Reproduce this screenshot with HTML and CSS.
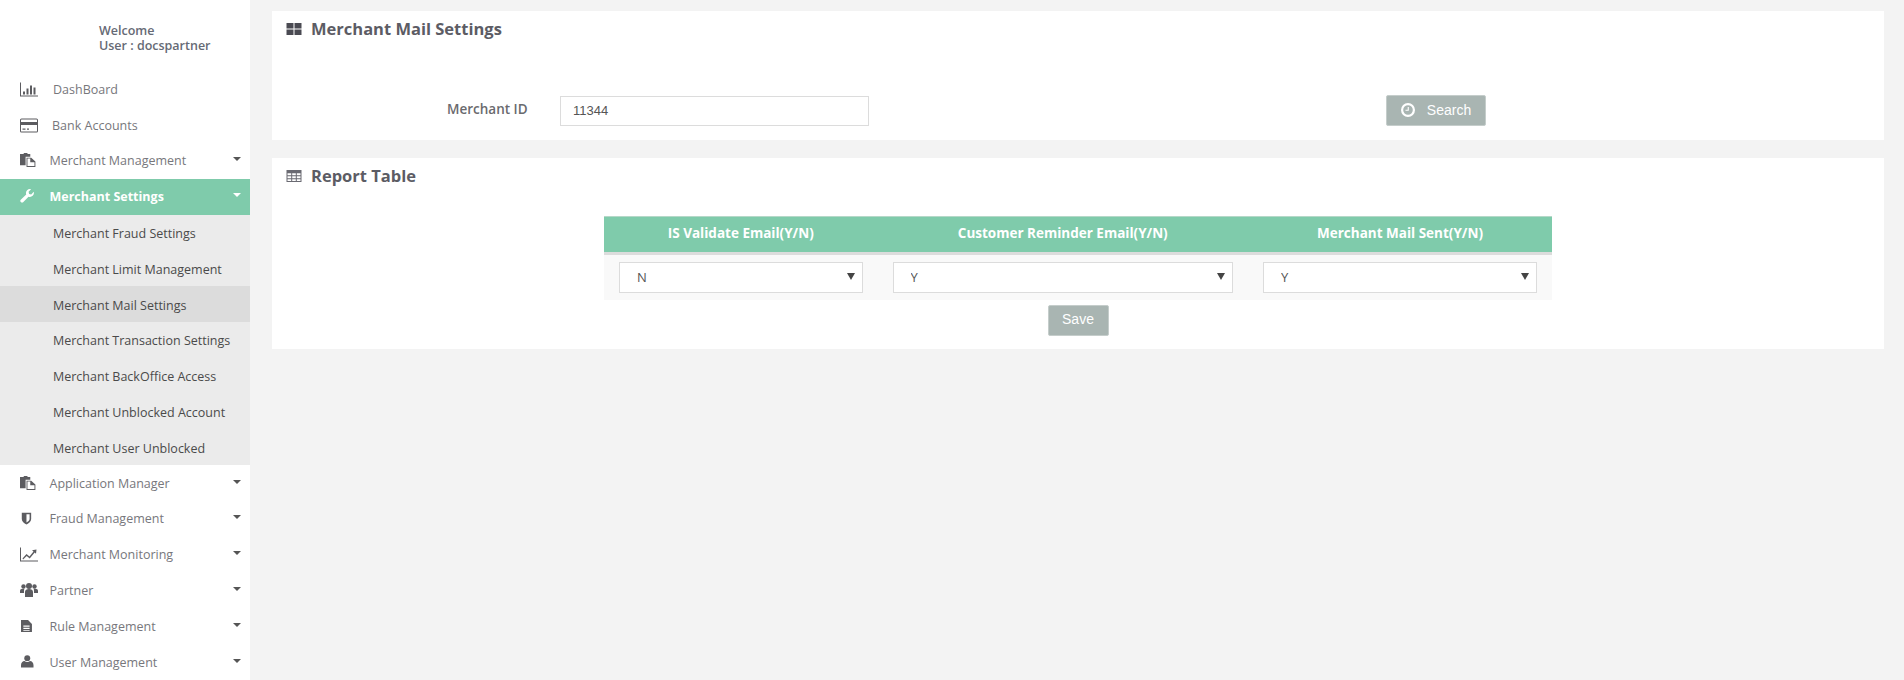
FILE: index.html
```html
<!DOCTYPE html>
<html lang="en">
<head>
<meta charset="utf-8">
<title>Merchant Mail Settings</title>
<link rel="stylesheet" href="styles.css">
</head>
<body>
<div class="app">
  <aside class="sidebar">
    <div class="welcome">Welcome<br>User : docspartner</div>
    <nav class="nav">
      <a class="item ind-a"><svg class="ico" preserveAspectRatio="xMinYMid" viewBox="0 0 18 14"><path d="M0 0h1v13h17v1H0z"/><path d="M3 9h2v3H3zM6.500 6h2v6h-2zM10 3h2v9h-2zM13.500 5h2v7h-2z"/></svg><span class="lbl">DashBoard</span></a>
      <a class="item ind-b"><svg class="ico" preserveAspectRatio="xMinYMid" viewBox="0 0 18 14"><path fill-rule="evenodd" d="M1.500 0h15A1.500 1.500 0 0 1 18 1.500v11a1.500 1.500 0 0 1-1.500 1.500h-15A1.500 1.500 0 0 1 0 12.500v-11A1.500 1.500 0 0 1 1.500 0zM1 3.500h16v-2a.5.5 0 0 0-.5-.5h-15a.5.5 0 0 0-.5.5zM1 6.500v6a.5.5 0 0 0 .5.5h15a.5.5 0 0 0 .5-.5v-6zM2.500 10h3v1.200h-3zM7 10h2v1.200H7z"/></svg><span class="lbl">Bank Accounts</span></a>
      <a class="item ind-c"><svg class="ico ico-md" preserveAspectRatio="xMinYMid" viewBox="0 0 17 15"><path d="M0 1h4V0h4v1h3v3H6v9H0z"/><path fill-rule="evenodd" d="M7 5h5l4.500 4v6H7zM8 6v8h7.500V10H11V6z"/></svg><span class="lbl">Merchant Management</span><i class="caret"></i></a>
      <a class="item active ind-c"><svg class="ico ico-md" preserveAspectRatio="xMinYMid" viewBox="0 0 16 16"><path d="M15.700 3.200a4.600 4.600 0 0 1-6 5.600L3.300 15.300a2 2 0 0 1-2.700-2.700l6.500-6.400A4.600 4.600 0 0 1 12.700.3L9.800 3.200l.6 2.400 2.400.6z"/></svg><span class="lbl">Merchant Settings</span><i class="caret"></i></a>
      <div class="sub">
        <a class="sub-item">Merchant Fraud Settings</a>
        <a class="sub-item">Merchant Limit Management</a>
        <a class="sub-item current">Merchant Mail Settings</a>
        <a class="sub-item">Merchant Transaction Settings</a>
        <a class="sub-item">Merchant BackOffice Access</a>
        <a class="sub-item">Merchant Unblocked Account</a>
        <a class="sub-item">Merchant User Unblocked</a>
      </div>
      <a class="item ind-c"><svg class="ico ico-md" preserveAspectRatio="xMinYMid" viewBox="0 0 17 15"><path d="M0 1h4V0h4v1h3v3H6v9H0z"/><path fill-rule="evenodd" d="M7 5h5l4.500 4v6H7zM8 6v8h7.500V10H11V6z"/></svg><span class="lbl">Application Manager</span><i class="caret"></i></a>
      <a class="item ind-c"><svg class="ico ico-sm" preserveAspectRatio="xMinYMid" viewBox="0 0 14 16"><path fill-rule="evenodd" d="M1 1h12v8c0 3-3 5.500-6 7-3-1.500-6-4-6-7zM7 3v10.500c2-1.200 4-2.800 4-4.500V3z"/></svg><span class="lbl">Fraud Management</span><i class="caret"></i></a>
      <a class="item ind-c"><svg class="ico" preserveAspectRatio="xMinYMid" viewBox="0 0 18 14"><path d="M0 0h1v13h17v1H0z"/><path d="M2.500 11l4-4.500 3 2.500 4-5-1.500-1.200L16.500 2l-.5 4.300-1.300-1.300-5 6-3-2.500-3.600 3.500z"/></svg><span class="lbl">Merchant Monitoring</span><i class="caret"></i></a>
      <a class="item ind-c"><svg class="ico ico-md" preserveAspectRatio="xMinYMid" viewBox="0 0 18 14"><circle cx="3.500" cy="3.500" r="2.200"/><circle cx="14.500" cy="3.500" r="2.200"/><circle cx="9" cy="3" r="3"/><path d="M0 10V8c0-1.500 1-2.200 3-2.200.6 0 1 .1 1.300.3C4 7 4 8 4 10zM18 10V8c0-1.500-1-2.200-3-2.200-.6 0-1 .1-1.300.3.3.9.3 1.900.3 3.900zM5 14V9c0-2 1.500-3 4-3s4 1 4 3v5z"/></svg><span class="lbl">Partner</span><i class="caret"></i></a>
      <a class="item ind-c"><svg class="ico ico-sm" preserveAspectRatio="xMinYMid" viewBox="0 0 14 16"><path fill-rule="evenodd" d="M0 0h9l5 5v11H0zM3 7v1.500h8V7zM3 10v1.500h8V10zM3 13v1h8v-1z"/></svg><span class="lbl">Rule Management</span><i class="caret"></i></a>
      <a class="item ind-c"><svg class="ico ico-sm" preserveAspectRatio="xMinYMid" viewBox="0 0 16 16"><circle cx="8" cy="4" r="3.800"/><path d="M0 16v-3c0-3 2-5 4.500-5.200C5.500 8.600 6.700 9 8 9s2.500-.4 3.500-1.200C14 8 16 10 16 13v3z"/></svg><span class="lbl">User Management</span><i class="caret"></i></a>
    </nav>
  </aside>
  <main class="main">
    <section class="panel panel-search">
      <h2 class="title"><svg class="title-ico" viewBox="0 0 15 12"><path d="M0 0h7v5.500H0zM8 0h7v5.500H8zM0 6.500h7V12H0zM8 6.500h7V12H8z"/></svg>Merchant Mail Settings</h2>
      <form class="search-row">
        <label class="field-label">Merchant ID</label>
        <input class="field" type="text" value="11344">
        <button class="btn btn-search" type="button"><svg class="btn-ico" viewBox="0 0 14 14"><path fill-rule="evenodd" d="M7 0a7 7 0 1 1 0 14A7 7 0 0 1 7 0zm0 2.200a4.800 4.800 0 1 0 0 9.600 4.800 4.800 0 0 0 0-9.600zM7.800 4v3.800H4.500V6.700h2.200V4z"/></svg>Search</button>
      </form>
    </section>
    <section class="panel panel-table">
      <h2 class="title"><svg class="title-ico" viewBox="0 0 15 12"><path fill-rule="evenodd" d="M0 0h15v12H0zM1 3.200v2h3.700v-2zm4.700 0v2h3.600v-2zm4.600 0v2H14v-2zM1 6.200v2h3.700v-2zm4.700 0v2h3.600v-2zm4.600 0v2H14v-2zM1 9.200V11h3.700V9.200zm4.700 0V11h3.600V9.200zm4.600 0V11H14V9.200z"/></svg>Report Table</h2>
      <table class="report">
        <thead>
          <tr>
            <th class="col-a">IS Validate Email(Y/N)</th>
            <th class="col-b">Customer Reminder Email(Y/N)</th>
            <th class="col-c">Merchant Mail Sent(Y/N)</th>
          </tr>
        </thead>
        <tbody>
          <tr>
            <td><span class="sel"><select><option>N</option><option>Y</option></select></span></td>
            <td><span class="sel"><select><option>Y</option><option>N</option></select></span></td>
            <td><span class="sel"><select><option>Y</option><option>N</option></select></span></td>
          </tr>
        </tbody>
      </table>
      <div class="actions"><button class="btn btn-save" type="button">Save</button></div>
    </section>
  </main>
</div>
</body>
</html>
```

FILE: styles.css
```css
* { box-sizing: border-box; }

html, body {
  margin: 0;
  height: 100%;
  overflow: hidden;
}

body {
  background: #f3f3f3;
  font-family: "Open Sans", "Liberation Sans", sans-serif;
  font-size: 12.500px;
  color: #666;
}

.app {
  display: flex;
  height: 680px;
}

.sidebar {
  flex: 0 0 250px;
  background: #fff;
  overflow: hidden;
}

.welcome {
  height: 71.500px;
  padding: 24px 0 0 99px;
  font-size: 12.500px;
  line-height: 14.500px;
  font-weight: 600;
  color: #666a75;
}

.item {
  display: flex;
  align-items: center;
  height: 35.800px;
  padding: 0 9px 0 20px;
  color: #77777c;
}

.ico {
  flex: 0 0 18px;
  height: 15px;
  fill: #5c5c60;
}

.ico-md { height: 14px; margin-top: -1px; }
.ico-sm { height: 12.500px; margin-top: -1px; padding-left: 1px; }

.lbl { flex: 1; }

.ind-a .lbl { margin-left: 15px; }
.ind-b .lbl { margin-left: 14px; }
.ind-c .lbl { margin-left: 11.500px; }

.caret {
  width: 0;
  height: 0;
  margin-top: -3px;
  border-left: 4px solid transparent;
  border-right: 4px solid transparent;
  border-top: 4px solid #555;
}

.item.active {
  background: #7fcbab;
  color: #fff;
  font-weight: 700;
}

.item.active .ico { fill: #fff; }
.item.active .caret { border-top-color: #fff; }

.sub { background: #ebebeb; }

.sub-item {
  display: flex;
  align-items: center;
  height: 35.800px;
  padding: 2px 0 0 53px;
  color: #4a4a4a;
}

.sub-item.current { background: #dcdcdc; }

.main {
  flex: 1;
  padding: 11px 20px 0 22px;
  min-width: 0;
}

.panel {
  background: #fff;
  margin-bottom: 18px;
}

.panel-search { height: 129px; }
.panel-table { height: 190.500px; }

.title {
  display: flex;
  align-items: center;
  margin: 0;
  padding: 8px 0 0 14px;
  height: 28px;
  font-size: 16.500px;
  line-height: 20px;
  font-weight: 700;
  color: #5c5c64;
}

.title-ico {
  width: 16px;
  height: 12px;
  margin-right: 9px;
  fill: #4a4a52;
}

.panel-table .title-ico { fill: #6a6a72; }

.search-row {
  display: flex;
  align-items: center;
  margin-top: 56px;
  padding-left: 175px;
}

.field-label {
  width: 81px;
  margin: -3px 32px 0 0;
  font-size: 13.500px;
  font-weight: 600;
  color: #6a6a6e;
}

.field {
  width: 309px;
  height: 30px;
  padding: 0 12px;
  border: 1px solid #dcdcdc;
  background: #fff;
  font-family: "Liberation Sans", sans-serif;
  font-size: 13px;
  color: #555;
  outline: none;
}

.btn {
  display: inline-flex;
  align-items: center;
  justify-content: center;
  border: 1px solid #c5cdcb;
  border-radius: 2px;
  background: #a9b5b2;
  color: #fff;
  font-family: "Liberation Sans", sans-serif;
  font-size: 14px;
  font-weight: 400;
}

.btn-search {
  width: 100px;
  height: 31px;
  margin-left: 517px;
  padding: 0 0 2px;
}

.btn-ico {
  width: 14px;
  height: 14px;
  margin-right: 12px;
  fill: #fff;
}

.report {
  width: 948px;
  margin: 29.500px auto 0;
  border-collapse: collapse;
  table-layout: fixed;
}

.report th {
  height: 37.500px;
  padding: 0 0 2px;
  background: #7fcbab;
  border-top: 1px solid #b5d8c8;
  border-bottom: 3px solid #dcdcdc;
  color: #fff;
  font-size: 13.500px;
  font-weight: 700;
  text-align: center;
}

.col-a { width: 273.500px; }
.col-b { width: 370.500px; }
.col-c { width: 304px; }

.report td {
  height: 45px;
  padding: 7px 15px 7.500px;
  background: #f9f9f9;
}

.sel {
  position: relative;
  display: block;
}

.sel::after {
  content: "";
  position: absolute;
  top: 11px;
  right: 8px;
  border-left: 4.500px solid transparent;
  border-right: 4.500px solid transparent;
  border-top: 7px solid #444;
  pointer-events: none;
}

.sel select {
  display: block;
  width: 100%;
  height: 30.500px;
  padding: 0 0 0 17px;
  border: 1px solid #dcdcdc;
  background: #fff;
  appearance: none;
  font-family: "Open Sans", "Liberation Sans", sans-serif;
  font-size: 13px;
  color: #555;
  outline: none;
}

.actions {
  display: flex;
  justify-content: center;
  margin-top: 5px;
}

.btn-save {
  width: 61px;
  height: 30.500px;
  padding: 0 0 2px;
}
```
